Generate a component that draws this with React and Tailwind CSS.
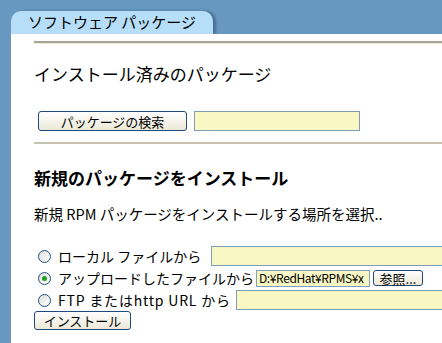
import React, { useState } from 'react';

const jp = { fontFamily: '"MS UI Gothic", "Noto Sans CJK JP", "DejaVu Sans", sans-serif' };

function Field({ className }) {
    return <input type="text" className={`h-[20px] shrink-0 border border-[#7f9db9] bg-[#f9f7c4] px-1 text-[13px] outline-none ${className}`} />;
}

function XpButton({ children, className }) {
    return (
        <button
            type="button"
            className={`block shrink-0 rounded-[3px] border border-[#1f4a7c] bg-gradient-to-b from-white to-[#ece9d8] text-[13px] leading-none text-black ${className}`}
        >
            {children}
        </button>
    );
}

function Radio({ checked }) {
    return (
        <span className="flex h-[13px] w-[13px] shrink-0 items-center justify-center rounded-full border border-[#1c5180] bg-gradient-to-br from-[#dcdcd6] to-white">
            {checked && <span className="h-[5px] w-[5px] rounded-full bg-[#21a121]" />}
        </span>
    );
}

export default function App() {
    const [source, setSource] = useState('upload');

    return (
        <div className="flex h-[343px] w-[442px] flex-col overflow-hidden bg-[#6898c0]" style={jp}>
            {/* Tab */}
            <div className="h-[34px] shrink-0 pl-[11px] pt-[11px]">
                <div className="flex h-[23px] w-[202px] items-center rounded-t-[10px] bg-[#b7def8] pl-[17px] text-[15px] text-black shadow-[3px_0_3px_rgba(40,70,100,0.5)]">
                    ソフトウェア パッケージ
                </div>
            </div>

            <div className="flex flex-1">
                <div className="w-[11px] shrink-0" />
                <div className="min-w-0 flex-1 overflow-hidden bg-white pl-[23px] text-black">
                    <div className="mt-[7px] border-t-2 border-[#a7a696]" />
                    <div className="border-t border-[#eeebdc]" />

                    <h2 className="mt-[20px] text-[17px] leading-[20px]">インストール済みのパッケージ</h2>

                    <div className="mt-[27px] flex items-center gap-[7px] pl-[4px]">
                        <XpButton className="h-[20px] w-[149px]">パッケージの検索</XpButton>
                        <Field className="w-[166px]" />
                    </div>

                    <div className="mt-[11px] border-t-2 border-[#c4c1b0]" />

                    <h2 className="mt-[24px] text-[17px] font-bold leading-[20px]">新規のパッケージをインストール</h2>

                    <p className="mt-[17px] whitespace-nowrap text-[14.5px] leading-[18px]">新規 RPM パッケージをインストールする場所を選択..</p>

                    <div className="mt-[23px] flex flex-col gap-[2px] whitespace-nowrap text-[14px] leading-[20px]">
                        <label className="flex h-[20px] items-center" onClick={() => setSource('local')}>
                            <span className="ml-[4px] mr-[7px]"><Radio checked={source === 'local'} /></span>
                            <span>ローカル ファイルから</span>
                            <Field className="ml-[10px] w-[240px]" />
                        </label>
                        <label className="flex h-[20px] items-center" onClick={() => setSource('upload')}>
                            <span className="ml-[4px] mr-[7px]"><Radio checked={source === 'upload'} /></span>
                            <span>アップロードしたファイルから</span>
                            <input
                                type="text"
                                defaultValue="D:¥RedHat¥RPMS¥x"
                                className="ml-[2px] h-[17px] w-[114px] shrink-0 border border-[#7f9db9] bg-[#f9f7c4] px-[2px] text-[12px] tracking-[-0.4px] outline-none"
                            />
                            <XpButton className="ml-[3px] h-[16px] w-[50px]">参照...</XpButton>
                        </label>
                        <label className="flex h-[20px] items-center" onClick={() => setSource('ftp')}>
                            <span className="ml-[4px] mr-[7px]"><Radio checked={source === 'ftp'} /></span>
                            <span className="tracking-[0.8px]">FTP またはhttp URL から</span>
                            <Field className="ml-[5px] w-[220px]" />
                        </label>
                    </div>

                    <XpButton className="mt-[1px] h-[19px] w-[97px]">インストール</XpButton>
                </div>
            </div>
        </div>
    );
}
